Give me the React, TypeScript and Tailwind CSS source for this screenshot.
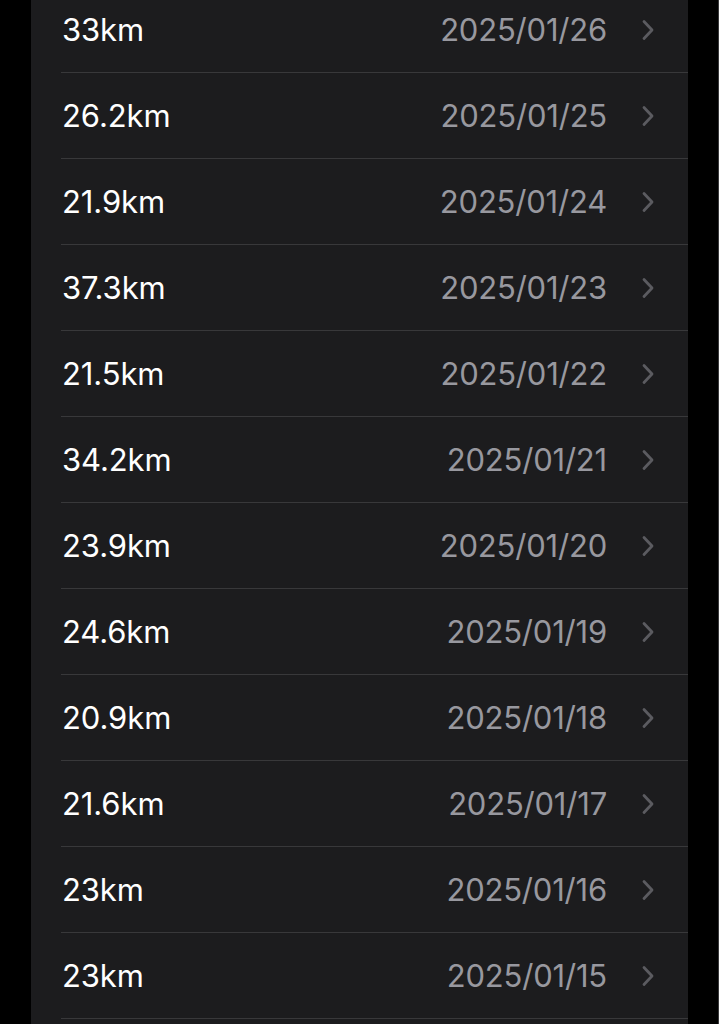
const runs = [
  { distance: "33km", date: "2025/01/26" },
  { distance: "26.2km", date: "2025/01/25" },
  { distance: "21.9km", date: "2025/01/24" },
  { distance: "37.3km", date: "2025/01/23" },
  { distance: "21.5km", date: "2025/01/22" },
  { distance: "34.2km", date: "2025/01/21" },
  { distance: "23.9km", date: "2025/01/20" },
  { distance: "24.6km", date: "2025/01/19" },
  { distance: "20.9km", date: "2025/01/18" },
  { distance: "21.6km", date: "2025/01/17" },
  { distance: "23km", date: "2025/01/16" },
  { distance: "23km", date: "2025/01/15" },
];

function Chevron() {
  return (
    <svg width="14" height="22" viewBox="0 0 14 22" fill="none" className="shrink-0">
      <path
        d="M3 2.5 L11 11 L3 19.5"
        stroke="#5b5b60"
        strokeWidth="2.8"
        strokeLinecap="round"
        strokeLinejoin="round"
      />
    </svg>
  );
}

export default function App() {
  return (
    <div
      className="h-[1024px] w-[719px] overflow-hidden border-r border-[#3a3a3c] bg-black"
      style={{ fontFamily: "Inter, 'Liberation Sans', sans-serif" }}
    >
      <div className="-mt-[13px] ml-[31px] w-[657px] bg-[#1c1c1e] pb-[40px]">
        {runs.map((run) => (
          <div key={run.date} className="pl-[30px]">
            <div className="flex h-[86px] items-center border-b border-[#38383a] pr-[33px]">
              <span className="pl-px pt-[2px] text-[31px] tracking-[-0.1px] text-white">
                {run.distance}
              </span>
              <span className="ml-auto pt-[2px] text-[31px] tracking-[-0.2px] text-[#98989f]">
                {run.date}
              </span>
              <span className="ml-[34px]">
                <Chevron />
              </span>
            </div>
          </div>
        ))}
      </div>
    </div>
  );
}
